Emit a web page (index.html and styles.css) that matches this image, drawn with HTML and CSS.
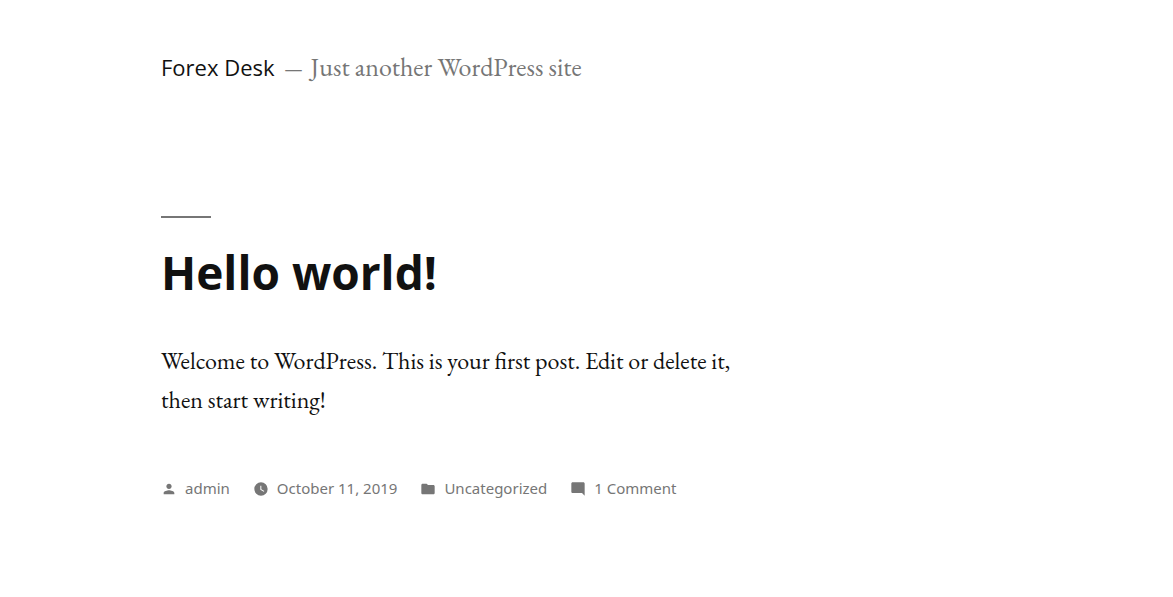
FILE: index.html
```html
<!DOCTYPE html>
<html lang="en">
<head>
<meta charset="utf-8">
<title>Forex Desk</title>
<link rel="stylesheet" href="styles.css">
</head>
<body>
<header class="site-header">
  <h1 class="site-title"><a href="#">Forex Desk</a></h1>
  <p class="site-description">Just another WordPress site</p>
</header>
<main class="site-main">
  <article class="entry">
    <h2 class="entry-title"><a href="#">Hello world!</a></h2>
    <p class="entry-content">Welcome to WordPress. This is your first post. Edit or delete it, then start writing!</p>
    <footer class="entry-footer">
      <a href="#"><svg class="icon" viewBox="0 0 24 24" aria-hidden="true"><path d="M12 12c2.21 0 4-1.79 4-4s-1.79-4-4-4-4 1.79-4 4 1.79 4 4 4zm0 2c-2.67 0-8 1.34-8 4v2h16v-2c0-2.66-5.33-4-8-4z"/></svg><span>admin</span></a>
      <a href="#"><svg class="icon" viewBox="0 0 24 24" aria-hidden="true"><path fill-rule="evenodd" d="M12 2a10 10 0 1 0 0 20 10 10 0 0 0 0-20zm4.2 14.2L11 13V7h1.500v5.200l4.500 2.700z"/></svg><time datetime="2019-10-11">October 11, 2019</time></a>
      <a href="#"><svg class="icon" viewBox="0 0 24 24" aria-hidden="true"><path d="M10 4H4c-1.100 0-2 .9-2 2v12c0 1.100.9 2 2 2h16c1.100 0 2-.9 2-2V8c0-1.100-.9-2-2-2h-8z"/></svg><span>Uncategorized</span></a>
      <a href="#"><svg class="icon" viewBox="0 0 24 24" aria-hidden="true"><path d="M21.990 4c0-1.100-.89-2-1.990-2H4c-1.100 0-2 .9-2 2v12c0 1.100.9 2 2 2h14l4 4z"/></svg><span>1 Comment</span></a>
    </footer>
  </article>
</main>
</body>
</html>
```
FILE: styles.css
```css
body {
  margin: 0;
  padding: 47px 14% 0 161px;
  background: #fff;
  color: #111;
  font-family: "EB Garamond", "Baskerville Old Face", "Liberation Serif", serif;
}
a { color: inherit; text-decoration: none; }
.site-header {
  display: flex;
  flex-wrap: wrap;
  align-items: baseline;
  font-size: 26px;
  line-height: 40px;
}
.site-title {
  margin: 0;
  font: 400 22px/40px "Open Sans", sans-serif;
}
.site-description { margin: 0; color: #767676; }
.site-description::before {
  content: "—";
  margin: 0 8px 0 10px;
  font: 400 18px/24px "Open Sans", sans-serif;
}
.site-main { max-width: 580px; padding-top: 129px; }
.entry-title {
  margin: 0;
  font: 700 46px/60px "Open Sans", sans-serif;
}
.entry-title::before {
  content: "";
  display: block;
  width: 50px;
  height: 2px;
  margin-bottom: 24px;
  background: #767676;
}
.entry-content { margin: 39px 0 0; font-size: 24px; line-height: 39px; }
.entry-footer {
  display: flex;
  flex-wrap: wrap;
  gap: 23px;
  margin-top: 57px;
  color: #767676;
  font: 400 15px/24px "Noto Sans", "Open Sans", sans-serif;
}
.entry-footer a { display: flex; align-items: center; gap: 8px; }
.icon { width: 16px; height: 16px; margin-top: 2px; fill: currentColor; }
```
